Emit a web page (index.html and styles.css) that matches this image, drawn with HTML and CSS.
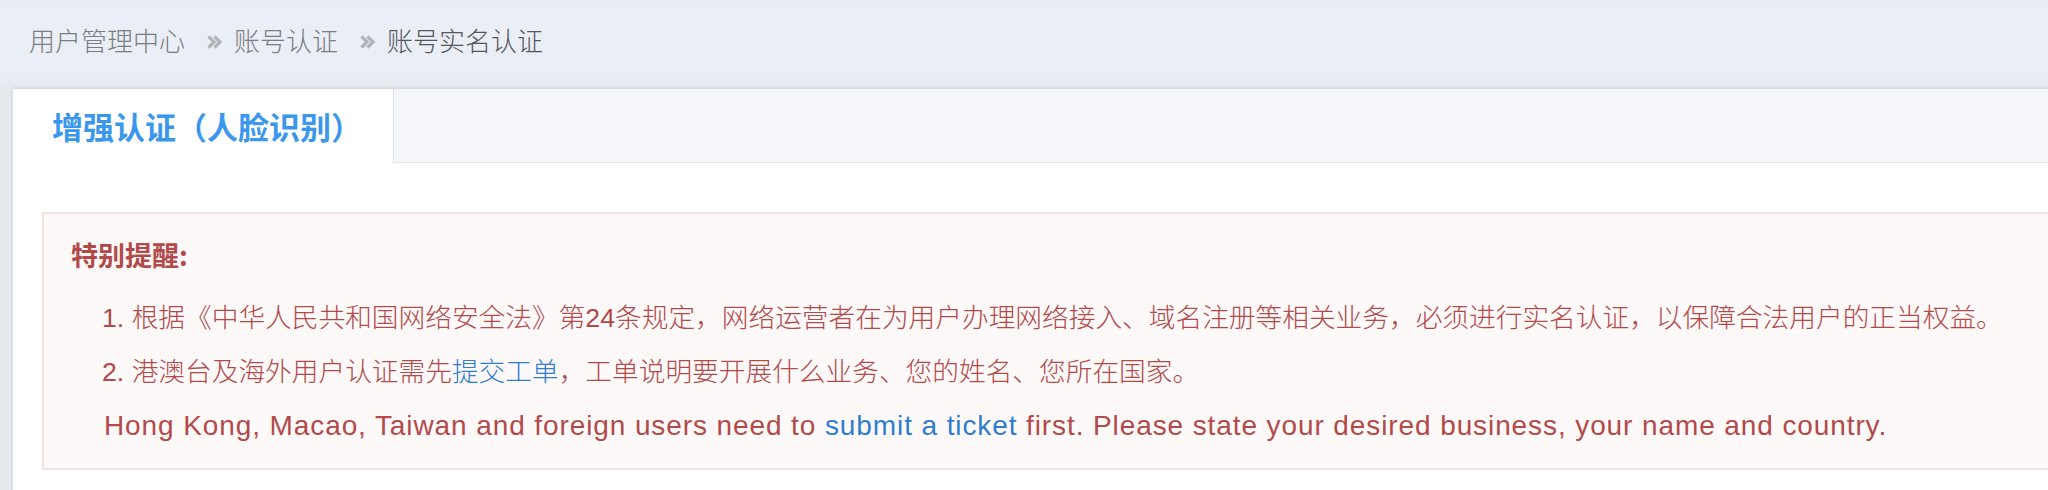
FILE: index.html
```html
<!DOCTYPE html>
<html lang="zh-CN">
<head>
<meta charset="utf-8">
<title>账号实名认证</title>
<link rel="stylesheet" href="styles.css">
</head>
<body>
<div class="page">
  <nav class="breadcrumb">
    <span class="crumb">用户管理中心</span>
    <svg class="sep" viewBox="0 0 15 14" width="15" height="14"><path d="M1.5 1.5 L7 7 L1.5 12.5 M7.5 1.5 L13 7 L7.5 12.5" fill="none" stroke="#b1b3b7" stroke-width="3.2"/></svg>
    <span class="crumb">账号认证</span>
    <svg class="sep" viewBox="0 0 15 14" width="15" height="14"><path d="M1.5 1.5 L7 7 L1.5 12.5 M7.5 1.5 L13 7 L7.5 12.5" fill="none" stroke="#b1b3b7" stroke-width="3.2"/></svg>
    <span class="crumb current">账号实名认证</span>
  </nav>
  <section class="card">
    <div class="tabs">
      <div class="tab active">增强认证（人脸识别）</div>
    </div>
    <div class="card-body">
      <div class="alert">
        <div class="alert-title">特别提醒:</div>
        <ol class="alert-list">
          <li><span class="num">1.</span> 根据《中华人民共和国网络安全法》第24条规定，网络运营者在为用户办理网络接入、域名注册等相关业务，必须进行实名认证，以保障合法用户的正当权益。</li>
          <li><span class="num">2.</span> 港澳台及海外用户认证需先<a class="link" href="#">提交工单</a>，工单说明要开展什么业务、您的姓名、您所在国家。</li>
        </ol>
        <p class="alert-en">Hong Kong, Macao, Taiwan and foreign users need to <a class="link" href="#">submit a ticket</a> first. Please state your desired business, your name and country.</p>
      </div>
    </div>
  </section>
</div>
</body>
</html>
```
FILE: styles.css
```css
html, body {
  margin: 0;
  padding: 0;
  overflow: hidden;
}
body {
  background: #e8ebf1;
  font-family: "Liberation Sans", "Noto Sans CJK SC", sans-serif;
  width: 2048px;
  height: 490px;
}
.page {
  background: linear-gradient(#e9ecf1 0, #eaeef6 10px, #eaeef6 76px, #e5e8ed 89px);
  height: 490px;
}
.breadcrumb {
  display: flex;
  align-items: center;
  height: 84px;
  padding-left: 29px;
  font-size: 26px;
  font-weight: 300;
  box-sizing: border-box;
}
.crumb {
  color: #7b7d81;
  line-height: 84px;
  height: 84px;
}
.crumb.current {
  color: #54565a;
}
.sep {
  margin: 0 12px 0 22px;
}
.card {
  margin: 5px -40px 0 13px;
  background: #fff;
  height: 420px;
  box-shadow: 0 -1px 3px rgba(160, 168, 180, 0.35);
}
.tabs {
  display: flex;
  height: 73px;
  background: #f4f6fa;
  border-bottom: 1px solid #e2e5ec;
}
.tab {
  width: 381px;
  box-sizing: border-box;
  padding: 0 0 2px 39px;
  display: flex;
  align-items: center;
  font-size: 31px;
  font-weight: 600;
  color: #3b97ec;
  font-family: "Noto Sans CJK SC", sans-serif;
}
.tab.active {
  background: #fff;
  height: 74px;
  border-right: 1px solid #e0e3ea;
}
.card-body {
  padding: 49px 0 0 29px;
}
.alert {
  background: #fef9f9;
  border: 2px solid #f3e1e3;
  padding: 14px 0 15px 27px;
  color: #b24a4a;
  font-size: 26.7px;
  font-weight: 300;
  line-height: 54px;
}
.alert-title {
  font-weight: bold;
  font-size: 27px;
  font-family: "Noto Sans CJK SC", sans-serif;
  margin-bottom: 9px;
}
.alert-list {
  list-style: none;
  margin: 0;
  padding: 0 0 0 31px;
}
.alert-list li {
  margin: 0;
}
.alert-en {
  margin: 0;
  padding-left: 33px;
  font-size: 28px;
  letter-spacing: 0.9px;
}
.link {
  color: #2f7dcf;
  text-decoration: none;
}
```
